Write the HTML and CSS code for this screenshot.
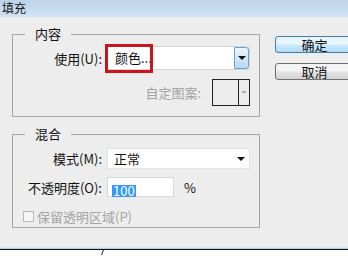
FILE: index.html
```html
<!DOCTYPE html>
<html lang="zh-CN">
<head>
    <meta charset="utf-8" />
    <title>填充</title>
    <link rel="stylesheet" href="styles.css">
</head>
<body>
    <div class="titlebar">填充</div>
    <div class="main">
        <div class="groups">
            <div class="group group_content">
                <span class="legend">内容</span>
                <div class="row">
                    <span class="label">使用(U):</span>
                    <div class="combo">
                        <span class="combo_text">颜色...</span>
                        <span class="combo_btn"><span class="arrow"></span></span>
                        <span class="mark"></span>
                    </div>
                </div>
                <div class="row row_pattern">
                    <span class="label_gray">自定图案:</span>
                    <div class="pattern">
                        <span class="pattern_swatch"></span>
                        <span class="pattern_btn"><span class="arrow arrow_gray"></span></span>
                    </div>
                </div>
            </div>
            <div class="group group_blend">
                <span class="legend">混合</span>
                <div class="row">
                    <span class="label">模式(M):</span>
                    <div class="select">
                        <span class="combo_text">正常</span>
                        <span class="arrow"></span>
                    </div>
                </div>
                <div class="row row_opacity">
                    <span class="label">不透明度(O):</span>
                    <div class="num_input"><span class="selected">100</span></div>
                    <span class="percent">%</span>
                </div>
                <div class="row row_check">
                    <span class="checkbox"></span>
                    <span class="label_gray">保留透明区域(P)</span>
                </div>
            </div>
        </div>
        <div class="buttons">
            <div class="btn btn_default">确定</div>
            <div class="btn">取消</div>
        </div>
    </div>
    <div class="edge"></div>
    <div class="footer"><span class="tick"></span></div>
</body>
</html>
```

FILE: styles.css
```css
body {
    margin: 0;
    width: 348px;
    height: 256px;
    overflow: hidden;
    background-color: #ededed;
    font: 13px "Noto Sans CJK SC", "DejaVu Sans", sans-serif;
    color: #111;
}

.titlebar {
    height: 17px;
    padding-left: 2px;
    font-size: 12px;
    line-height: 16px;
    background: linear-gradient(#bcd3ea, #d3e3f2);
}

.main {
    display: flex;
    height: 230px;
}

.groups {
    display: flex;
    flex-direction: column;
    gap: 17px;
    margin: 17px 0 0 12px;
}

.group {
    position: relative;
    box-sizing: border-box;
    width: 248px;
    border: 1px solid #a5a5a5;
    padding-right: 9px;
}

.group_content {
    height: 83px;
    padding-top: 11px;
}

.group_blend {
    height: 94px;
    padding-top: 13px;
}

.legend {
    position: absolute;
    top: -10px;
    left: 12px;
    padding: 0 10px;
    background-color: #ededed;
    line-height: 18px;
}

.row {
    display: flex;
    align-items: center;
}

.label {
    width: 89px;
    margin-right: 4px;
    text-align: right;
    white-space: nowrap;
}

.label_gray {
    color: #a3a3a3;
    white-space: nowrap;
}

.combo {
    position: relative;
    flex: 1;
    display: flex;
    height: 24px;
    box-sizing: border-box;
    border: 1px solid #d6d6d6;
    background-color: #fff;
}

.combo_text {
    flex: 1;
    padding-left: 8px;
    line-height: 22px;
}

.combo_btn {
    display: flex;
    align-items: center;
    justify-content: center;
    width: 13px;
    border: 1px solid #6f9ec9;
    border-radius: 0 3px 3px 0;
    background: linear-gradient(#eef6fd, #b7d8f2);
}

.arrow {
    width: 0;
    height: 0;
    border-left: 4px solid transparent;
    border-right: 4px solid transparent;
    border-top: 4px solid #111;
}

.arrow_gray {
    border-left-width: 3px;
    border-right-width: 3px;
    border-top: 3px solid #b0b0b0;
}

.mark {
    position: absolute;
    left: -2px;
    top: -3px;
    width: 48px;
    height: 29px;
    box-sizing: border-box;
    border: 3px solid #c8161d;
}

.row_pattern {
    justify-content: flex-end;
    gap: 11px;
    margin-top: 9px;
}

.pattern {
    display: flex;
    width: 38px;
    height: 27px;
    box-sizing: border-box;
    border: 1px solid #222;
}

.pattern_swatch {
    flex: 1;
    border-right: 1px solid #222;
}

.pattern_btn {
    display: flex;
    align-items: center;
    justify-content: center;
    width: 10px;
}

.select {
    flex: 1;
    display: flex;
    align-items: center;
    height: 21px;
    margin-left: 1px;
    padding-right: 4px;
    box-sizing: border-box;
    border: 1px solid #e2e2e2;
    background-color: #fff;
}

.select .combo_text {
    padding-left: 6px;
    line-height: 19px;
}

.row_opacity {
    margin-top: 8px;
}

.num_input {
    width: 67px;
    height: 20px;
    margin-left: 1px;
    box-sizing: border-box;
    border: 1px solid #d8d8d8;
    background-color: #fff;
    padding: 3px 0 0 4px;
}

.selected {
    display: inline-block;
    background-color: #3399ff;
    color: #fff;
    line-height: 12px;
    padding: 0 1px;
}

.percent {
    margin-left: 10px;
}

.row_check {
    margin: 10px 0 0 10px;
    gap: 3px;
}

.checkbox {
    width: 11px;
    height: 11px;
    box-sizing: border-box;
    border: 1px solid #b8b8b8;
    background-color: #f6f6f6;
}

.buttons {
    display: flex;
    flex-direction: column;
    gap: 10px;
    margin: 19px 0 0 15px;
}

.btn {
    width: 79px;
    height: 17px;
    box-sizing: border-box;
    border: 1px solid #707070;
    border-radius: 3px;
    background: linear-gradient(#f4f4f4 45%, #e3e3e3 55%, #d2d2d2);
    text-align: center;
    line-height: 15px;
}

.btn_default {
    border-color: #3c7fb1;
    background: linear-gradient(#eaf6fd 45%, #c9e9fc 55%, #b2dcf3);
}

.edge {
    height: 1px;
    background-color: #a8d8ea;
    border-top: 1px solid #cfeaf4;
    border-bottom: 1px solid #111;
}

.footer {
    height: 6px;
    padding-left: 102px;
    background-color: #fff;
}

.tick {
    display: block;
    width: 1px;
    height: 5px;
    background-color: #222;
    transform: skewX(-20deg);
}
```
